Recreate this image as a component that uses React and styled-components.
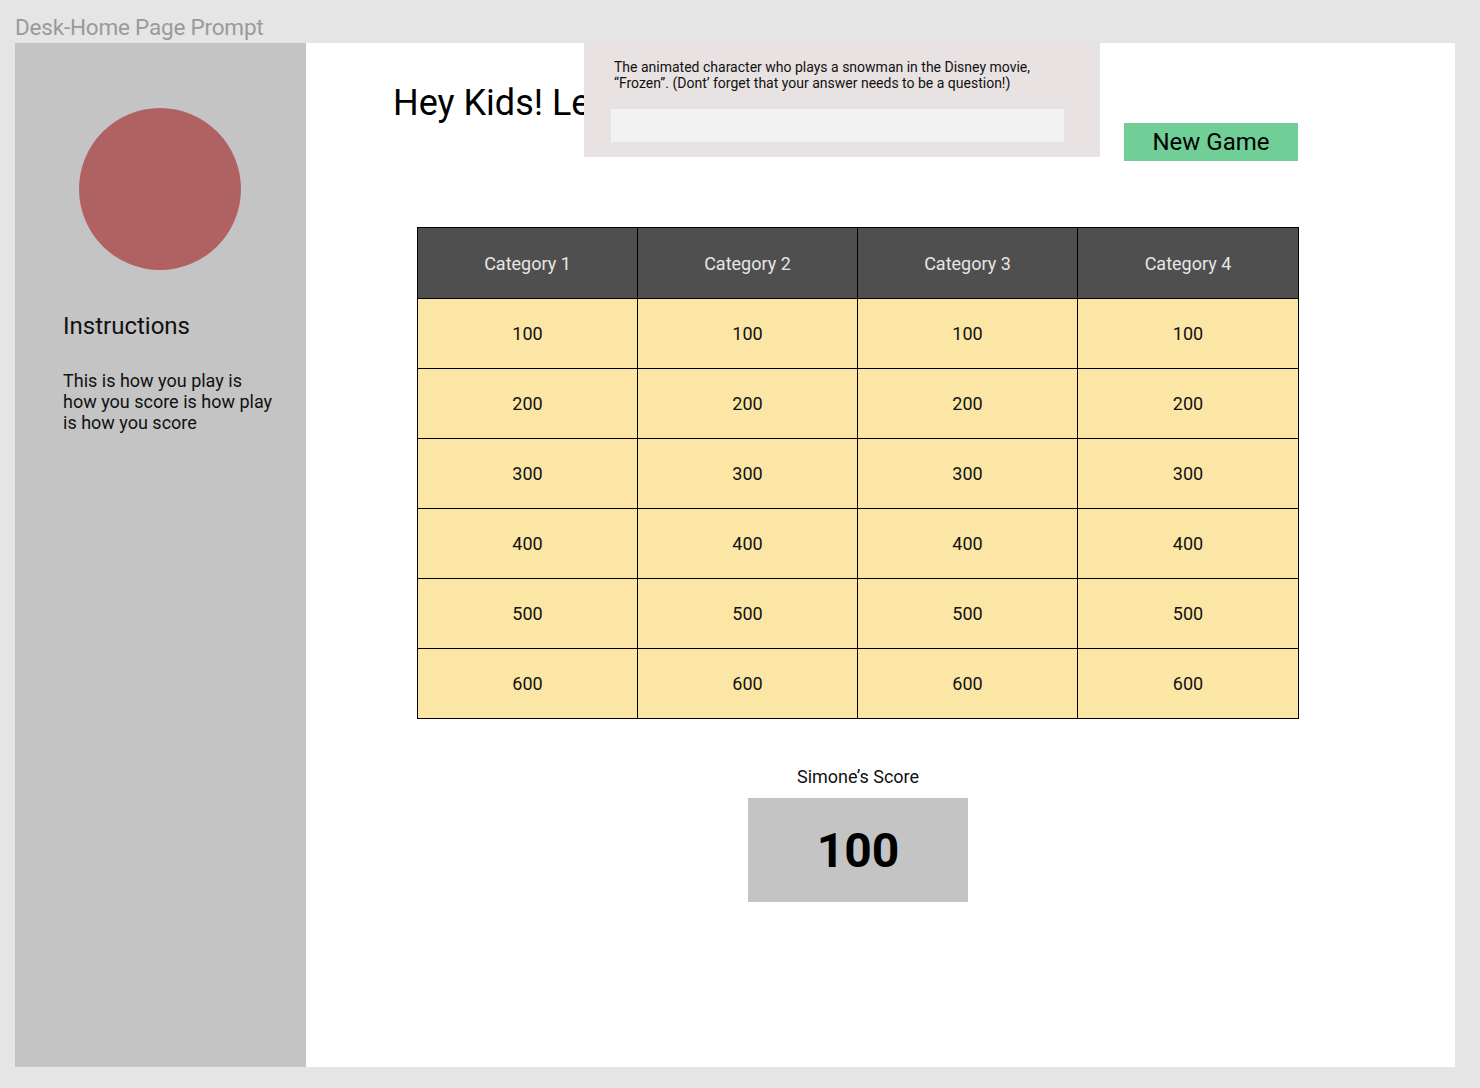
import React from "react";
import styled, { createGlobalStyle } from "styled-components";

const Global = createGlobalStyle`
  html, body { margin: 0; padding: 0; background: #e5e5e5; }
  body { font-family: Roboto, "Liberation Sans", sans-serif; }
  * { box-sizing: border-box; }
`;

const Page = styled.div`
  width: 1480px;
  height: 1088px;
  background: #e5e5e5;
  padding: 0 25px 21px 15px;
  display: flex;
  flex-direction: column;
`;

const PageTitle = styled.div`
  height: 43px;
  display: flex;
  align-items: center;
  padding-top: 10px;
  font-size: 22.5px;
  color: #9a9a9a;
  letter-spacing: -0.2px;
`;

const Frame = styled.div`
  flex: 1;
  display: flex;
`;

const Sidebar = styled.aside`
  width: 291px;
  flex-shrink: 0;
  background: #c4c4c4;
  padding: 65px 31px 0 48px;
  display: flex;
  flex-direction: column;
`;

const Avatar = styled.div`
  width: 162px;
  height: 162px;
  border-radius: 50%;
  background: #b06262;
  margin-left: 16px;
`;

const SideHeading = styled.h2`
  margin: 43px 0 0;
  font-size: 24px;
  line-height: 26px;
  font-weight: 400;
  color: #111;
`;

const SideText = styled.p`
  margin: 31px 0 0;
  font-size: 18px;
  line-height: 21px;
  color: #111;
`;

const Main = styled.main`
  flex: 1;
  background: #fff;
  position: relative;
  padding: 39px 0 0 87px;
  overflow: hidden;
`;

const TopRow = styled.div`
  width: 905px;
  display: flex;
  justify-content: space-between;
  align-items: flex-start;
`;

const Heading = styled.h1`
  margin: 0;
  font-size: 36px;
  line-height: 43px;
  font-weight: 400;
  color: #000;
  white-space: nowrap;
`;

const NewGameButton = styled.button`
  margin-top: 41px;
  width: 174px;
  height: 38px;
  border: none;
  background: #6fcf97;
  font-family: inherit;
  font-size: 24px;
  color: #000;
  padding: 0;
  cursor: pointer;
`;

const Prompt = styled.div`
  position: absolute;
  left: 278px;
  top: 0;
  width: 516px;
  height: 114px;
  background: #e8e2e2;
  padding: 16px 30px 0 27px;
`;

const PromptText = styled.p`
  margin: 0 0 0 3px;
  font-size: 14px;
  line-height: 16px;
  color: #111;
  white-space: nowrap;
`;

const AnswerInput = styled.input`
  display: block;
  margin-top: 18px;
  width: 453px;
  height: 33px;
  border: none;
  background: #f2f2f2;
  outline: none;
`;

const BoardColumn = styled.div`
  width: 882px;
  margin: 66px 0 0 24px;
  display: flex;
  flex-direction: column;
  align-items: center;
`;

const Board = styled.div`
  width: 882px;
  display: grid;
  grid-template-columns: 219px 219px 219px 220px;
  grid-template-rows: 70px repeat(6, 69px);
  gap: 1px;
  padding: 1px;
  background: #000;
`;

const Cell = styled.div`
  display: flex;
  align-items: center;
  justify-content: center;
  font-size: 18px;
  background: ${(p) => (p.$header ? "#4f4f4f" : "#fbe6a6")};
  color: ${(p) => (p.$header ? "#e6e6e6" : "#111")};
`;

const ScoreLabel = styled.div`
  margin-top: 47px;
  font-size: 18px;
  line-height: 21px;
  color: #111;
`;

const ScoreBox = styled.div`
  margin-top: 11px;
  width: 220px;
  height: 104px;
  background: #c4c4c4;
  display: flex;
  align-items: center;
  justify-content: center;
  font-size: 48px;
  font-weight: 700;
  color: #000;
`;

const categories = ["Category 1", "Category 2", "Category 3", "Category 4"];
const values = [100, 200, 300, 400, 500, 600];

export default function App() {
  return (
    <>
      <Global />
      <Page>
        <PageTitle>Desk-Home Page Prompt</PageTitle>
        <Frame>
          <Sidebar>
            <Avatar />
            <SideHeading>Instructions</SideHeading>
            <SideText>
              This is how you play is how you score is how play is how you score
            </SideText>
          </Sidebar>
          <Main>
            <TopRow>
              <Heading>Hey Kids! Let's Play Jeopardy!</Heading>
              <NewGameButton>New Game</NewGameButton>
            </TopRow>
            <Prompt>
              <PromptText>
                The animated character who plays a snowman in the Disney movie,
                <br />
                “Frozen”. (Dont’ forget that your answer needs to be a question!)
              </PromptText>
              <AnswerInput type="text" aria-label="Answer" />
            </Prompt>
            <BoardColumn>
              <Board>
                {categories.map((c) => (
                  <Cell key={c} $header>
                    {c}
                  </Cell>
                ))}
                {values.map((v) =>
                  categories.map((c) => <Cell key={c + v}>{v}</Cell>)
                )}
              </Board>
              <ScoreLabel>Simone’s Score</ScoreLabel>
              <ScoreBox>100</ScoreBox>
            </BoardColumn>
          </Main>
        </Frame>
      </Page>
    </>
  );
}
